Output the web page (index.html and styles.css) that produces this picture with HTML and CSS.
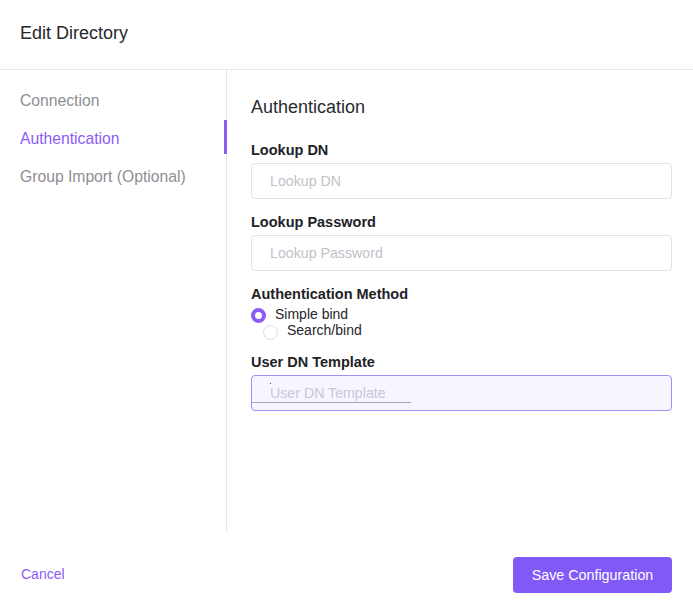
FILE: index.html
```html
<!DOCTYPE html>
<html>
<head>
<meta charset="utf-8">
<link rel="stylesheet" href="styles.css">
</head>
<body>
<div class="modal">
  <header class="head">
    <h1 class="title">Edit Directory</h1>
  </header>
  <div class="main">
    <nav class="side">
      <div class="nav-item">Connection</div>
      <div class="nav-item active">Authentication</div>
      <div class="nav-item">Group Import (Optional)</div>
    </nav>
    <section class="content">
      <h2 class="section-title">Authentication</h2>
      <div class="field">
        <label class="label">Lookup DN</label>
        <div class="input"><span class="ph">Lookup DN</span></div>
      </div>
      <div class="field">
        <label class="label">Lookup Password</label>
        <div class="input"><span class="ph">Lookup Password</span></div>
      </div>
      <div class="field method">
        <label class="label">Authentication Method</label>
        <div class="radios">
          <div class="radio-row"><span class="radio checked"></span><span class="radio-text">Simple bind</span></div>
          <div class="radio-row second"><span class="radio"></span><span class="radio-text">Search/bind</span></div>
        </div>
      </div>
      <div class="field">
        <label class="label">User DN Template</label>
        <div class="input focus"><span class="inner"><span class="ph">User DN Template</span></span></div>
      </div>
    </section>
  </div>
  <footer class="foot">
    <a class="cancel">Cancel</a>
    <button class="save">Save Configuration</button>
  </footer>
</div>
</body>
</html>
```

FILE: styles.css
```css
* { box-sizing: border-box; }
html, body { margin: 0; padding: 0; background: #fff; }
body { font-family: "Liberation Sans", Arial, sans-serif; color: #26262b; }
.modal { width: 693px; height: 613px; display: flex; flex-direction: column; }
.head { height: 70px; border-bottom: 1px solid #e8e8ea; padding: 0 20px; display: flex; align-items: center; }
.title { margin: 0; font-size: 18px; font-weight: 400; color: #27272c; position: relative; top: -1px; }
.main { display: flex; height: 462px; }
.side { width: 227px; border-right: 1px solid #e6e6e8; padding-top: 19px; }
.nav-item { height: 38px; line-height: 23px; padding: 0 20px; font-size: 15.7px; color: #8e8e93; position: relative; }
.nav-item.active { color: #8b5cf6; }
.nav-item.active::after { content: ""; position: absolute; right: -1px; top: -7px; width: 3px; height: 34px; background: #8b5cf6; }
.content { flex: 1; padding: 26px 21px 0 24px; }
.section-title { margin: 0 0 24px; font-size: 18px; font-weight: 400; color: #2a2a2f; line-height: 22px; }
.field { margin-bottom: 15px; }
.label { display: block; font-size: 14.5px; font-weight: 700; color: #222226; line-height: 17px; margin-bottom: 4px; }
.input { height: 36px; border: 1px solid #e3e3e6; border-radius: 4px; display: flex; align-items: center; padding-left: 18px; }
.ph { font-size: 14.2px; color: #c2c2c7; }
.input.focus { border-color: #a58cf5; background: #f7f5ff; padding-left: 0; align-items: flex-start; }
.inner { display: block; width: 159px; height: 27px; border-bottom: 1px solid #a9a6b0; padding-left: 18px; padding-top: 8px; position: relative; }
.inner .ph { color: #cbc6d8; }
.inner::before { content: ""; position: absolute; left: 18px; top: 7px; width: 1px; height: 1px; background: #555; }
.field.method { margin-bottom: 16px; }
.radios { display: flex; flex-direction: column; margin-top: -1px; }
.radio-row { display: flex; align-items: center; height: 16px; font-size: 14px; color: #26262b; }
.radio-row.second { padding-left: 12px; height: 16px; }
.radio { width: 15px; height: 15px; border-radius: 50%; border: 1px solid #dcdce0; background: #fff; margin-right: 9px; flex: none; position: relative; top: 2px; }
.radio-row:first-child .radio { top: 1px; }
.radio.checked { border: 4px solid #8b5cf6; }
.radio-text { line-height: 16px; }
.foot { flex: 1; display: flex; align-items: center; justify-content: space-between; padding: 0 21px 0 21px; }
.cancel { color: #8b5cf6; font-size: 14px; cursor: pointer; position: relative; top: 1px; }
.save { background: #8059f7; color: #fff; border: none; border-radius: 4px; height: 36px; width: 159px; font-family: "Liberation Sans", Arial, sans-serif; font-size: 14.3px; padding: 0; margin-top: 5px; }
```
